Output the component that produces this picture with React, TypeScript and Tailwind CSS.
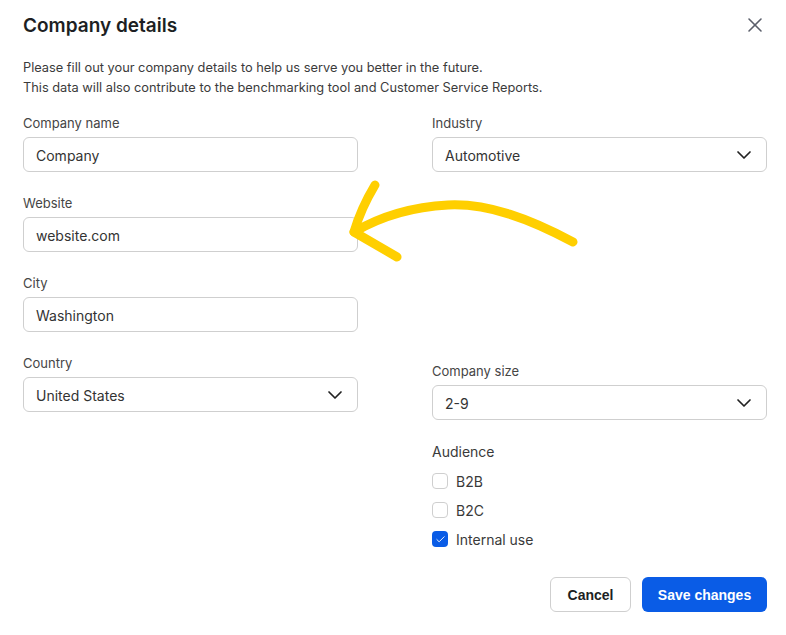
import { ChevronDown, X, Check } from "lucide-react"

function Field({ label, value, select }: { label: string; value: string; select?: boolean }) {
  return (
    <div className="flex flex-col gap-[6px]">
      <label className="text-[13px] leading-[16px] text-[#454545]">{label}</label>
      <div className="flex h-[35px] items-center justify-between rounded-[6px] border border-[#cfcfcf] bg-white pl-[12px] pr-[10px] pt-[1px]">
        <span className="text-[14px] text-[#333333]">{value}</span>
        {select && <ChevronDown size={24} strokeWidth={1.7} className="text-[#222]" />}
      </div>
    </div>
  )
}

function CheckRow({ label, checked }: { label: string; checked?: boolean }) {
  return (
    <label className="flex h-[20px] items-center gap-[8px]">
      {checked ? (
        <span className="flex h-[16px] w-[16px] items-center justify-center rounded-[4px] bg-[#0a5ce6]">
          <Check size={11} strokeWidth={2} className="text-white" />
        </span>
      ) : (
        <span className="h-[16px] w-[16px] rounded-[4px] border border-[#cfcfcf] bg-white" />
      )}
      <span className="text-[14px] text-[#3a3a3a]">{label}</span>
    </label>
  )
}

export default function App() {
  return (
    <div className="relative h-[635px] w-[786px] bg-white pl-[23px] pr-[19px] pt-[14px] font-['Inter',sans-serif]">
      <div className="flex h-[24px] items-center justify-between">
        <h1 className="text-[19px] font-semibold leading-[24px] text-[#1d1f23]">Company details</h1>
        <button className="-mt-[3px] flex h-[24px] w-[24px] items-center justify-center text-[#5b5f6b]">
          <X size={24} strokeWidth={1.6} />
        </button>
      </div>

      <p className="mt-[20px] text-[12.8px] leading-[20px] text-[#3b3b3b]">
        Please fill out your company details to help us serve you better in the future.
        <br />
        This data will also contribute to the benchmarking tool and Customer Service Reports.
      </p>

      <div className="mt-[17px] grid grid-cols-[335px_335px] gap-x-[74px]">
        <div className="flex flex-col gap-[23px]">
          <Field label="Company name" value="Company" />
          <Field label="Website" value="website.com" />
          <Field label="City" value="Washington" />
          <Field label="Country" value="United States" select />
        </div>

        <div className="flex flex-col">
          <Field label="Industry" value="Automotive" select />
          <div className="mt-[191px]">
            <Field label="Company size" value="2-9" select />
          </div>
          <div className="mt-[23px] text-[14px] leading-[18px] text-[#3a3a3a]">Audience</div>
          <div className="mt-[10px] flex flex-col gap-[9px]">
            <CheckRow label="B2B" />
            <CheckRow label="B2C" />
            <CheckRow label="Internal use" checked />
          </div>
          <div className="mt-[28px] flex justify-end gap-[11px] font-['Liberation_Sans',sans-serif]">
            <button className="h-[35px] w-[81px] rounded-[6px] border border-[#cfcfcf] bg-white pt-[1px] text-[14px] font-bold text-[#1d1f23]">
              Cancel
            </button>
            <button className="h-[35px] w-[125px] rounded-[6px] bg-[#0a5ce6] pt-[1px] text-[14px] font-bold text-white">
              Save changes
            </button>
          </div>
        </div>
      </div>

      <svg
        className="pointer-events-none absolute left-0 top-0"
        width="786"
        height="635"
        viewBox="0 0 786 635"
        fill="none"
        stroke="#ffcf00"
        strokeWidth="9"
        strokeLinecap="round"
        strokeLinejoin="round"
      >
        <path d="M573 242 C530 219 488 203 448 205 C410 207 378 218 354 232" />
        <path d="M375 185 C366 200 359 215 354 232 L397 257" />
      </svg>
    </div>
  )
}
